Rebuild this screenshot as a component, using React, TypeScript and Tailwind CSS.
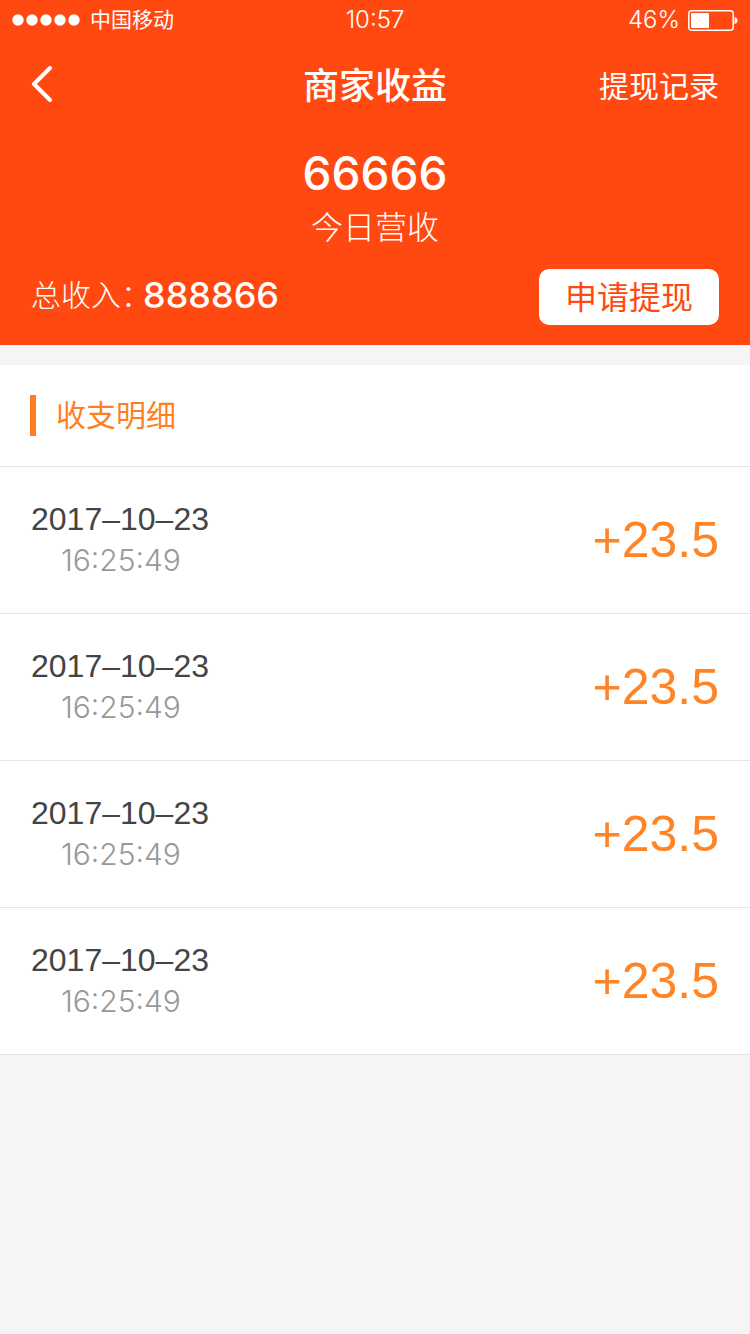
interface RecordItem {
  id: number;
  date: string;
  time: string;
  amount: string;
}

const RECORDS: RecordItem[] = [
  { id: 1, date: '2017–10–23', time: '16:25:49', amount: '+23.5' },
  { id: 2, date: '2017–10–23', time: '16:25:49', amount: '+23.5' },
  { id: 3, date: '2017–10–23', time: '16:25:49', amount: '+23.5' },
  { id: 4, date: '2017–10–23', time: '16:25:49', amount: '+23.5' },
];

const StatusBar = () => (
  <div className="grid grid-cols-3 items-center h-10 px-3 text-2xl font-light">
    <div className="flex items-center gap-[10px]">
      <svg width="68" height="12" viewBox="0 0 68 12" fill="currentColor" aria-hidden="true">
        {[6, 20, 34, 48, 62].map(x => <circle key={x} cx={x} cy="6" r="5.7" />)}
      </svg>
      <span className="text-[21px] font-normal">中国移动</span>
    </div>
    <span className="text-center">10:57</span>
    <div className="flex items-center justify-end gap-2">
      <span>46%</span>
      <svg width="50" height="21" viewBox="0 0 50 21" fill="none" aria-hidden="true">
        <rect x="0.8" y="0.8" width="44.4" height="19.4" rx="3" stroke="currentColor" strokeWidth="1.5" />
        <rect x="3" y="3" width="18" height="15" rx="1" fill="currentColor" />
        <path d="M46.5 7c4 1 4 6 0 7z" fill="currentColor" />
      </svg>
    </div>
  </div>
);

export default function App() {
  return (
    <div className="min-h-screen bg-[#f5f5f5] font-['Inter','Noto_Sans_CJK_SC',sans-serif]">
      <header className="bg-[#ff4911] text-white">
        <StatusBar />
        <nav className="grid grid-cols-3 items-center h-[88px] px-[31px]">
          <button type="button" aria-label="返回" className="justify-self-start">
            <svg width="22" height="36" viewBox="0 0 22 36" fill="none" stroke="currentColor" strokeWidth="4" strokeLinecap="round" strokeLinejoin="round">
              <path d="M19 2 3 18l16 16" />
            </svg>
          </button>
          <h1 className="pt-1 text-center text-4xl font-medium">商家收益</h1>
          <a href="#records" className="justify-self-end pt-1 text-3xl">提现记录</a>
        </nav>
        <div className="flex flex-col items-center pt-4">
          <strong className="text-[46px] leading-[58px] font-medium">66666</strong>
          <span className="pt-0.5 text-[32px] leading-[48px] font-light">今日营收</span>
        </div>
        <div className="flex items-center justify-between px-[31px] pt-[17px] pb-5">
          <p className="flex items-center pb-1 text-3xl font-light">
            总收入：<strong className="-ml-2 text-4xl font-medium">888866</strong>
          </p>
          <button type="button" className="h-14 w-[180px] rounded-[10px] bg-white pt-0.5 text-[32px] text-[#ff4911]">申请提现</button>
        </div>
      </header>

      <main id="records" className="mt-5 bg-white">
        <div className="flex items-center h-[102px] px-[30px] border-b border-[#e5e5e5]">
          <h2 className="border-l-6 border-[#ff7f1f] pl-5 text-3xl leading-[41px] text-[#ff7f1f]">收支明细</h2>
        </div>
        <ul className="font-['Liberation_Sans',sans-serif]">
          {RECORDS.map(r => (
            <li key={r.id} className="flex items-center justify-between h-[147px] px-[31px] border-b border-[#e5e5e5]">
              <div>
                <p className="text-[32px] leading-[41px] text-[#444444]">{r.date}</p>
                <p className="pl-[30px] font-['Inter',sans-serif] text-3xl leading-[41px] font-light text-[#999999]">{r.time}</p>
              </div>
              <span className="text-[50px] text-[#ff8426]">{r.amount}</span>
            </li>
          ))}
        </ul>
      </main>
    </div>
  );
}
